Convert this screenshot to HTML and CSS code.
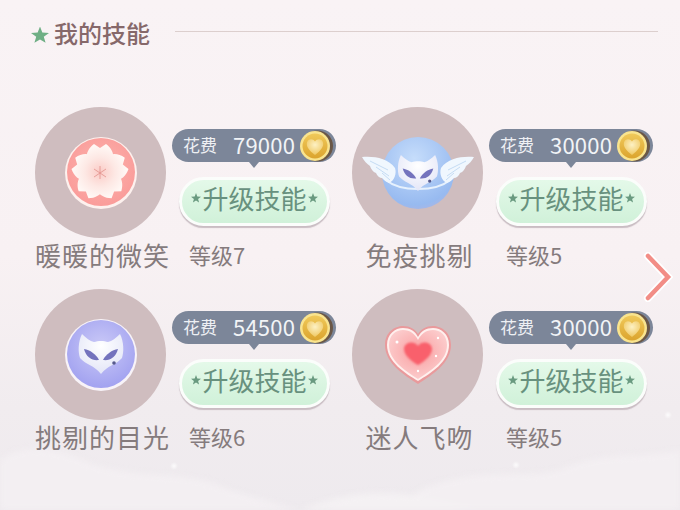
FILE: index.html
```html
<!DOCTYPE html>
<html lang="zh-CN">
<head>
    <meta charset="UTF-8">
    <meta name="viewport" content="width=device-width, initial-scale=1.0">
    <title>我的技能</title>
    <link rel="stylesheet" href="styles.css">
</head>
<body>
    <!-- Shared icons -->
    <svg class="icon-defs" aria-hidden="true">
        <defs>
            <linearGradient id="coinGold" x1="0" y1="0" x2="0" y2="1">
                <stop offset="0" stop-color="#f0c95a"/>
                <stop offset="1" stop-color="#dba42e"/>
            </linearGradient>
            <radialGradient id="coinHeart" cx="0.5" cy="0.35" r="0.7">
                <stop offset="0" stop-color="#fdf1c4"/>
                <stop offset="1" stop-color="#eec55a"/>
            </radialGradient>
            <radialGradient id="maskFill" cx="0.5" cy="0.3" r="0.8">
                <stop offset="0" stop-color="#ffffff"/>
                <stop offset="1" stop-color="#dfe2f6"/>
            </radialGradient>
            <symbol id="coin" viewBox="0 0 34 32">
                <circle cx="17.500" cy="16" r="15.500" fill="#6a5747"/>
                <circle cx="15" cy="16" r="15" fill="#f9e48f"/>
                <circle cx="15" cy="16" r="12.500" fill="url(#coinGold)"/>
                <path d="M15 25 C9 20.500 6 16.500 7 12.500 C8 8.500 13 8.500 15 11.500 C17 8.500 22 8.500 23 12.500 C24 16.500 21 20.500 15 25Z" fill="url(#coinHeart)"/>
            </symbol>
            <symbol id="catMask" viewBox="0 0 46 40">
                <path d="M4 0 C8 4 12 7 16 8 C20 6.500 26 6.500 30 8 C34 7 38 4 42 0 C46 8 46 18 44 24 C38 31 30 31 23 40 C16 31 8 31 2 24 C0 18 0 8 4 0Z" fill="url(#maskFill)"/>
                <path d="M6 15 C12 16 18 20 21 26 C14 27 8 23 6 15Z" fill="#7473bd"/>
                <path d="M40 15 C34 16 28 20 25 26 C32 27 38 23 40 15Z" fill="#7473bd"/>
                <circle cx="36" cy="29" r="1.800" fill="#565a8c"/>
            </symbol>
        </defs>
    </svg>

    <div class="page">
        <div class="section-head">
            <span class="head-star"></span>
            <h1>我的技能</h1>
            <span class="head-line"></span>
        </div>

        <div class="skills">
            <!-- 暖暖的微笑 -->
            <div class="skill">
                <div class="skill-top">
                    <div class="avatar">
                        <svg class="skill-icon" viewBox="0 0 72 72">
                            <defs>
                                <radialGradient id="pinkOrb" cx="0.5" cy="0.45" r="0.6">
                                    <stop offset="0" stop-color="#fcb4ae"/>
                                    <stop offset="1" stop-color="#fa9a98"/>
                                </radialGradient>
                                <radialGradient id="petal" cx="0" cy="0" r="27" gradientUnits="userSpaceOnUse">
                                    <stop offset="0" stop-color="#fbcbc6"/>
                                    <stop offset="0.55" stop-color="#fde8e4"/>
                                    <stop offset="1" stop-color="#fff8f5"/>
                                </radialGradient>
                            </defs>
                            <circle cx="36" cy="36" r="36" fill="#fdf1ee"/>
                            <circle cx="36" cy="35" r="34" fill="url(#pinkOrb)"/>
                            <g transform="translate(35 35)" fill="url(#petal)">
                                <path d="M0 0 C-16 -6 -17 -20 -6 -28 L0 -24 L6 -28 C17 -20 16 -6 0 0Z"/>
                                <path transform="rotate(72)" d="M0 0 C-16 -6 -17 -20 -6 -28 L0 -24 L6 -28 C17 -20 16 -6 0 0Z"/>
                                <path transform="rotate(144)" d="M0 0 C-16 -6 -17 -20 -6 -28 L0 -24 L6 -28 C17 -20 16 -6 0 0Z"/>
                                <path transform="rotate(216)" d="M0 0 C-16 -6 -17 -20 -6 -28 L0 -24 L6 -28 C17 -20 16 -6 0 0Z"/>
                                <path transform="rotate(288)" d="M0 0 C-16 -6 -17 -20 -6 -28 L0 -24 L6 -28 C17 -20 16 -6 0 0Z"/>
                            </g>
                            <path d="M35 29 V42 M29 32 L41 40 M41 32 L29 40" stroke="#e2908c" stroke-width="0.800" fill="none"/>
                        </svg>
                    </div>
                    <div class="upgrade">
                        <div class="cost">
                            <span class="cost-label">花费</span>
                            <span class="cost-num">79000</span>
                            <svg class="coin"><use href="#coin"/></svg>
                        </div>
                        <button class="upgrade-btn">升级技能</button>
                    </div>
                </div>
                <div class="skill-info">
                    <span class="skill-name">暖暖的微笑</span>
                    <span class="skill-level">等级7</span>
                </div>
            </div>

            <!-- 免疫挑剔 -->
            <div class="skill">
                <div class="skill-top">
                    <div class="avatar">
                        <svg class="skill-icon skill-icon-wide" viewBox="0 0 112 74">
                            <defs>
                                <radialGradient id="blueOrb" cx="0.45" cy="0.3" r="0.8">
                                    <stop offset="0" stop-color="#c6ddfb"/>
                                    <stop offset="0.8" stop-color="#97baf0"/>
                                    <stop offset="1" stop-color="#b3b3de"/>
                                </radialGradient>
                            </defs>
                            <circle cx="56" cy="37" r="36" fill="url(#blueOrb)"/>
                            <path d="M24 44 C38 56 74 56 88 44" stroke="#e6f1fd" stroke-width="2" fill="none"/>
                            <path d="M0 21 C12 20 26 22 33 32 C35 38 32 45 27 47 C24 46 22 44 20 42 C18 42 15 40 14 37 C11 36 9 33 8 30 C5 28 2 25 0 21Z" fill="#f0f7fe"/>
                            <path d="M112 21 C100 20 86 22 79 32 C77 38 80 45 85 47 C88 46 90 44 92 42 C94 42 97 40 98 37 C101 36 103 33 104 30 C107 28 110 25 112 21Z" fill="#f0f7fe"/>
                            <path d="M8 25 L26 34 M14 31 L27 40 M20 37 L28 44" stroke="#c5dcf4" stroke-width="1" fill="none"/>
                            <path d="M104 25 L86 34 M98 31 L85 40 M92 37 L84 44" stroke="#c5dcf4" stroke-width="1" fill="none"/>
                            <svg x="32" y="19" width="48" height="36"><use href="#catMask"/></svg>
                        </svg>
                    </div>
                    <div class="upgrade">
                        <div class="cost">
                            <span class="cost-label">花费</span>
                            <span class="cost-num">30000</span>
                            <svg class="coin"><use href="#coin"/></svg>
                        </div>
                        <button class="upgrade-btn">升级技能</button>
                    </div>
                </div>
                <div class="skill-info">
                    <span class="skill-name">免疫挑剔</span>
                    <span class="skill-level">等级5</span>
                </div>
            </div>

            <!-- 挑剔的目光 -->
            <div class="skill">
                <div class="skill-top">
                    <div class="avatar">
                        <svg class="skill-icon" viewBox="0 0 72 72">
                            <defs>
                                <radialGradient id="purpleOrb" cx="0.5" cy="0.4" r="0.6">
                                    <stop offset="0" stop-color="#cbcaf7"/>
                                    <stop offset="1" stop-color="#a2a2f0"/>
                                </radialGradient>
                            </defs>
                            <circle cx="36" cy="36" r="36" fill="#f8f3f8"/>
                            <circle cx="36" cy="35" r="34" fill="url(#purpleOrb)"/>
                            <svg x="11" y="15" width="50" height="40"><use href="#catMask"/></svg>
                        </svg>
                    </div>
                    <div class="upgrade">
                        <div class="cost">
                            <span class="cost-label">花费</span>
                            <span class="cost-num">54500</span>
                            <svg class="coin"><use href="#coin"/></svg>
                        </div>
                        <button class="upgrade-btn">升级技能</button>
                    </div>
                </div>
                <div class="skill-info">
                    <span class="skill-name">挑剔的目光</span>
                    <span class="skill-level">等级6</span>
                </div>
            </div>

            <!-- 迷人飞吻 -->
            <div class="skill">
                <div class="skill-top">
                    <div class="avatar">
                        <svg class="skill-icon skill-icon-heart" viewBox="0 0 68 60">
                            <defs>
                                <radialGradient id="heartFill" cx="0.5" cy="0.45" r="0.6">
                                    <stop offset="0" stop-color="#f99ea0"/>
                                    <stop offset="1" stop-color="#fcd0d0"/>
                                </radialGradient>
                                <filter id="heartBlur">
                                    <feGaussianBlur stdDeviation="1"/>
                                </filter>
                            </defs>
                            <path d="M34 59 C20 50 1 38 1 20 C1 7 11 1 19 1 C26 1 31 4 34 9 C37 4 42 1 49 1 C57 1 67 7 67 20 C67 38 48 50 34 59Z" fill="#e99a9c"/>
                            <path d="M34 56 C21 48 3 37 3 20 C3 9 11 3 19 3 C26 3 31 6 34 12 C37 6 42 3 49 3 C57 3 65 9 65 20 C65 37 47 48 34 56Z" fill="#fff0ee"/>
                            <path d="M34 54 C22 46 5 36 5 20 C5 10 12 5 19 5 C26 5 31 9 34 15 C37 9 42 5 49 5 C56 5 63 10 63 20 C63 36 46 46 34 54Z" fill="url(#heartFill)"/>
                            <path d="M34 40 C27 36 20 30 20 24 C20 17 30 15 34 21 C38 15 48 17 48 24 C48 30 41 36 34 40Z" fill="#f9616c" filter="url(#heartBlur)"/>
                            <circle cx="13" cy="17" r="1.500" fill="#fff"/>
                            <circle cx="54" cy="13" r="1.200" fill="#fff"/>
                            <circle cx="52" cy="31" r="1.200" fill="#fff"/>
                            <circle cx="34" cy="46" r="1.200" fill="#fff"/>
                        </svg>
                    </div>
                    <div class="upgrade">
                        <div class="cost">
                            <span class="cost-label">花费</span>
                            <span class="cost-num">30000</span>
                            <svg class="coin"><use href="#coin"/></svg>
                        </div>
                        <button class="upgrade-btn">升级技能</button>
                    </div>
                </div>
                <div class="skill-info">
                    <span class="skill-name">迷人飞吻</span>
                    <span class="skill-level">等级5</span>
                </div>
            </div>
        </div>

        <!-- Next page arrow -->
        <svg class="next-arrow" viewBox="0 0 30 50">
            <path d="M5 4 L25 25 L5 46" stroke="#ffffff" stroke-width="8" fill="none" stroke-linecap="round" stroke-linejoin="miter"/>
            <path d="M5 4 L25 25 L5 46" stroke="#f28d86" stroke-width="4.500" fill="none" stroke-linecap="round" stroke-linejoin="miter"/>
        </svg>

        <!-- Clouds at the bottom of the background -->
        <svg class="clouds" viewBox="0 0 680 90" preserveAspectRatio="none">
            <path d="M0 40 C30 20 60 30 95 45 C150 60 190 50 230 70 L300 90 L0 90Z" fill="#f3eff2"/>
            <path d="M420 70 C480 45 520 60 560 50 C600 30 640 40 680 30 L680 90 L400 90Z" fill="#f3eff2"/>
            <path d="M300 90 C350 70 390 68 450 82 L480 90Z" fill="#f4f1f3"/>
        </svg>
    </div>
</body>
</html>
```

FILE: styles.css
```css
* {
    box-sizing: border-box;
}

body {
    margin: 0;
    padding: 0;
    font-family: "Noto Sans CJK SC", "Noto Sans", sans-serif;
}

.icon-defs {
    position: absolute;
    width: 0;
    height: 0;
}

.page {
    position: relative;
    width: 680px;
    height: 510px;
    overflow: hidden;
    padding: 17px 22px 0 31px;
    background-color: #f8f1f3;
    background-image:
        radial-gradient(circle at 516px 465px, rgba(255, 255, 255, 0.8) 0, rgba(255, 255, 255, 0) 4px),
        radial-gradient(circle at 174px 466px, rgba(255, 255, 255, 0.8) 0, rgba(255, 255, 255, 0) 4px),
        radial-gradient(circle at 668px 415px, rgba(255, 255, 255, 0.8) 0, rgba(255, 255, 255, 0) 4px),
        linear-gradient(#f9f3f5 0, #f8f1f3 50%, #f1ecef 80%, #eeeaee 100%);
}

/* Section title */
.section-head {
    display: flex;
    align-items: center;
    height: 36px;
}

.head-star {
    width: 18px;
    height: 17px;
    background-color: #6faf85;
    clip-path: polygon(50% 0, 63% 35%, 100% 38%, 71% 60%, 81% 96%, 50% 76%, 19% 96%, 29% 60%, 0 38%, 37% 35%);
}

.section-head h1 {
    margin: 0 0 4px 5px;
    font-size: 24px;
    line-height: 32px;
    font-weight: 500;
    color: #86686a;
}

.head-line {
    flex: 1;
    height: 1px;
    margin: 0 0 8px 25px;
    background-color: #dccfce;
}

/* Skill grid */
.skills {
    display: grid;
    grid-template-columns: 317px 306px;
    grid-auto-rows: 182px;
    margin: 54px 0 0 4px;
    position: relative;
    z-index: 1;
}

.skill-top {
    display: flex;
    gap: 6px;
}

.avatar {
    display: flex;
    align-items: center;
    justify-content: center;
    flex-shrink: 0;
    width: 131px;
    height: 131px;
    border-radius: 50%;
    background-color: #cfbdbf;
}

.skill-icon {
    width: 72px;
    height: 72px;
    flex-shrink: 0;
}

.skill-icon-wide {
    width: 112px;
    height: 74px;
}

.skill-icon-heart {
    width: 68px;
    height: 60px;
}

/* Cost bubble and button */
.upgrade {
    padding-top: 22px;
}

.cost {
    position: relative;
    display: flex;
    align-items: center;
    width: 164px;
    height: 33px;
    padding-left: 11px;
    border-radius: 17px;
    background-color: #7c8699;
}

.cost::after {
    content: "";
    position: absolute;
    left: 77px;
    bottom: -6px;
    border-top: 6px solid #7c8699;
    border-left: 5px solid transparent;
    border-right: 5px solid transparent;
}

.cost-label {
    width: 50px;
    margin-bottom: 3px;
    font-size: 17px;
    color: #eef0f4;
}

.cost-num {
    margin-bottom: 3px;
    font-size: 22px;
    letter-spacing: 0.200px;
    color: #f2f4f7;
}

.coin {
    width: 34px;
    height: 32px;
    margin-left: 5px;
}

.upgrade-btn {
    position: relative;
    display: block;
    width: 151px;
    height: 49px;
    margin: 15px 0 0 7px;
    padding: 0 0 7px;
    border: 3px solid #fbfdfb;
    border-radius: 25px;
    background-color: #d9f6e0;
    background-image: linear-gradient(#e4f9e9, #d0f1d9);
    box-shadow: 0 2px 1px #c9bdc3;
    font-family: inherit;
    font-size: 26px;
    line-height: 36px;
    color: #68917e;
}

.upgrade-btn::before,
.upgrade-btn::after {
    content: "";
    position: absolute;
    top: 13px;
    width: 10px;
    height: 10px;
    background-color: #6a9a80;
    clip-path: polygon(50% 0, 63% 35%, 100% 38%, 71% 60%, 81% 96%, 50% 76%, 19% 96%, 29% 60%, 0 38%, 37% 35%);
}

.upgrade-btn::before {
    left: 9px;
}

.upgrade-btn::after {
    right: 9px;
}

/* Name and level */
.skill-info {
    display: flex;
    align-items: center;
    height: 32px;
    color: #857b7d;
}

.skill-name {
    width: 135px;
    flex-shrink: 0;
    text-align: center;
    font-size: 26px;
    letter-spacing: 1px;
    white-space: nowrap;
}

.skill-level {
    margin-left: 19px;
    font-size: 22px;
    white-space: nowrap;
}

.next-arrow {
    position: absolute;
    left: 643px;
    top: 252px;
    width: 30px;
    height: 50px;
    z-index: 2;
}

.clouds {
    position: absolute;
    left: 0;
    bottom: 0;
    width: 680px;
    height: 90px;
    filter: blur(3px);
}
```
